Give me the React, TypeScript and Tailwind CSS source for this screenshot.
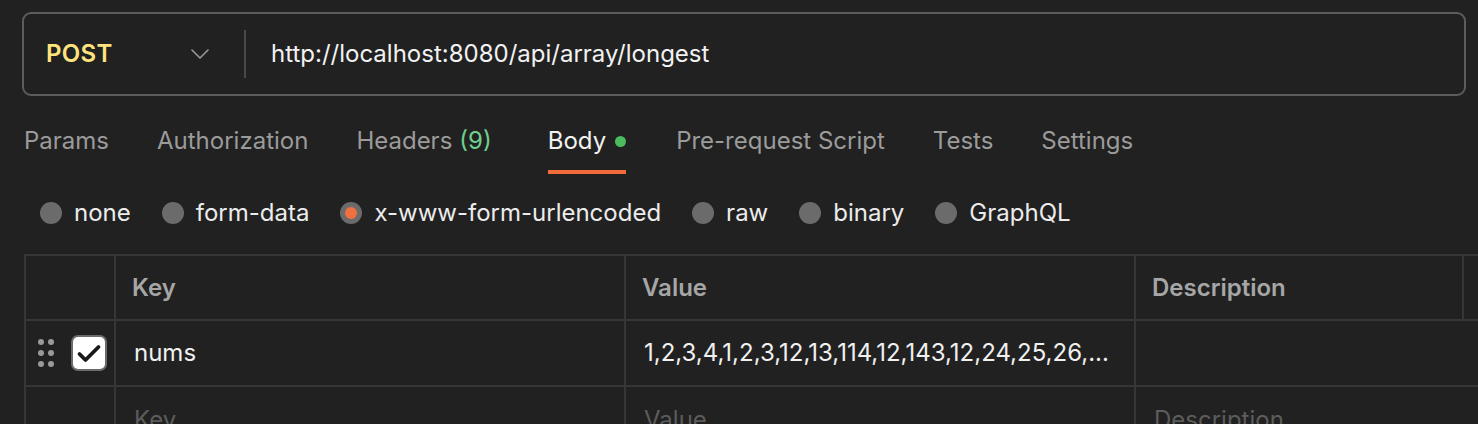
import * as React from "react";

const TABS = [
  { label: "Params" },
  { label: "Authorization" },
  { label: "Headers", count: "(9)" },
  { label: "Body", active: true },
  { label: "Pre-request Script" },
  { label: "Tests" },
  { label: "Settings" },
];

const BODY_TYPES = ["none", "form-data", "x-www-form-urlencoded", "raw", "binary", "GraphQL"];

function DragHandle() {
  return (
    <div className="grid grid-cols-2 gap-x-[4px] gap-y-[5px]">
      {[0, 1, 2, 3, 4, 5].map((i) => (
        <span key={i} className="block w-[6px] h-[6px] rounded-full bg-[#9a9a9a]" />
      ))}
    </div>
  );
}

function CheckBox() {
  return (
    <div className="w-[36px] h-[36px] rounded-[7px] border-2 border-[#6b6b6b] bg-white flex items-center justify-center">
      <svg width="26" height="26" viewBox="0 0 26 26" fill="none">
        <path d="M3.5 14l6 6L22.5 7" stroke="#1a1a1a" strokeWidth="3.8" strokeLinecap="round" strokeLinejoin="round" />
      </svg>
    </div>
  );
}

export default function App() {
  return (
    <div
      className="w-[1478px] h-[424px] overflow-hidden bg-[#212121] text-[24px] leading-[32px]"
      style={{ fontFamily: "Inter, 'Noto Sans', sans-serif" }}
    >
      {/* URL bar */}
      <div className="pt-[12px] pl-[22px] pr-[12px]">
        <div className="h-[84px] rounded-[9px] border-2 border-[#5c5c5c] flex items-center">
          <div className="w-[220px] pl-[22px] pr-[35px] flex items-center justify-between">
            <span className="font-semibold text-[#ffe47e] tracking-[0.3px]">POST</span>
            <svg width="18" height="10" viewBox="0 0 18 10" fill="none">
              <path d="M1 1l8 8 8-8" stroke="#9a9a9a" strokeWidth="1.6" strokeLinecap="round" strokeLinejoin="round" />
            </svg>
          </div>
          <div className="w-[2px] h-[48px] bg-[#4a4a4a]" />
          <span className="pl-[25px] text-[#f2f2f2]">http://localhost:8080/api/array/longest</span>
        </div>
      </div>

      {/* Tabs */}
      <div className="flex pl-[24px] pt-[29px] gap-[48px]">
        {TABS.map((t) => (
          <div
            key={t.label}
            className={`relative flex items-start h-[49px] ${t.active ? "ml-[8px] mr-[2px]" : ""}`}
          >
            <span className={t.active ? "text-[#f2f2f2]" : "text-[#9b9b9b]"}>{t.label}</span>
            {t.count && <span className="ml-[7px] text-[#6fcf8f]">{t.count}</span>}
            {t.active && <span className="ml-[9px] mt-[11px] w-[11px] h-[11px] rounded-full bg-[#4cbb5e]" />}
            {t.active && <span className="absolute left-0 right-0 bottom-0 h-[4px] bg-[#f26b3a]" />}
          </div>
        ))}
      </div>

      {/* Body type radios */}
      <div className="flex items-center pl-[40px] mt-[23px] h-[32px]">
        {BODY_TYPES.map((b) => {
          const on = b === "x-www-form-urlencoded";
          return (
            <div key={b} className="flex items-center mr-[31px]">
              <span className="w-[22px] h-[22px] rounded-full bg-[#6b6b6b] flex items-center justify-center">
                {on && <span className="w-[12px] h-[12px] rounded-full bg-[#f0703f]" />}
              </span>
              <span className="ml-[12px] text-[#ececec]">{b}</span>
            </div>
          );
        })}
      </div>

      {/* Table */}
      <div className="ml-[24px] mt-[25px] border-t-2 border-l-2 border-[#363636]">
        <div className="flex h-[65px] border-b-2 border-[#363636] text-[#a6a6a6] font-semibold">
          <div className="w-[90px] border-r-2 border-[#363636]" />
          <div className="w-[510px] border-r-2 border-[#363636] flex items-center pl-[16px]">Key</div>
          <div className="w-[510px] border-r-2 border-[#363636] flex items-center pl-[16px]">Value</div>
          <div className="w-[328px] border-r-2 border-[#363636] flex items-center pl-[16px]">Description</div>
          <div className="flex-1" />
        </div>
        <div className="flex h-[66px] border-b-2 border-[#363636] text-[#f0f0f0]">
          <div className="w-[90px] border-r-2 border-[#363636] flex items-center pl-[12px] gap-[17px]">
            <DragHandle />
            <CheckBox />
          </div>
          <div className="w-[510px] border-r-2 border-[#363636] flex items-center pl-[18px]">nums</div>
          <div className="w-[510px] border-r-2 border-[#363636] flex items-center pl-[18px]">
            1,2,3,4,1,2,3,12,13,114,12,143,12,24,25,26,...
          </div>
          <div className="flex-1" />
        </div>
        <div className="flex h-[66px] text-[#5c5c5c]">
          <div className="w-[90px] border-r-2 border-[#363636]" />
          <div className="w-[510px] border-r-2 border-[#363636] flex items-center pl-[18px]">Key</div>
          <div className="w-[510px] border-r-2 border-[#363636] flex items-center pl-[18px]">Value</div>
          <div className="flex-1 flex items-center pl-[18px]">Description</div>
        </div>
      </div>
    </div>
  );
}
